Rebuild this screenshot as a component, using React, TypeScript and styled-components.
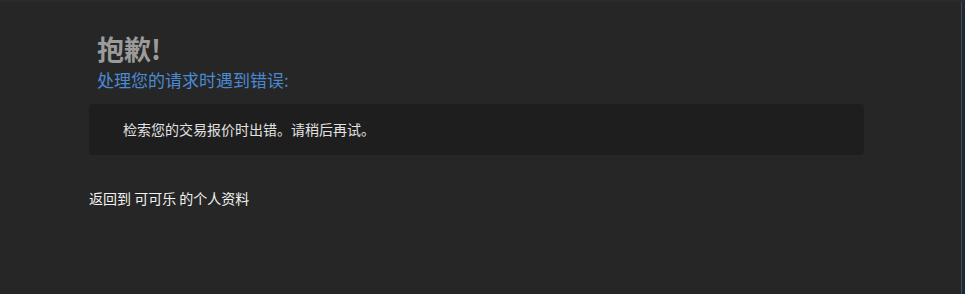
import React from "react";
import styled, { createGlobalStyle } from "styled-components";

const GlobalStyle = createGlobalStyle`
  html, body {
    margin: 0;
    padding: 0;
    background: #262626;
  }
  body {
    font-family: "Noto Sans CJK SC", "Noto Sans", sans-serif;
  }
`;

const Frame = styled.div`
  display: flex;
  height: 294px;
  background: #262626;
  border-top: 2px solid #2b2b2b;
  box-sizing: border-box;
`;

const Main = styled.div`
  flex: 1;
  padding: 28px 0 0 89px;
  box-sizing: border-box;
`;

const SideEdge = styled.div`
  width: 3px;
  border-left: 1px solid #4a4a4a;
  background: #1b2a3a;
`;

const Header = styled.div`
  padding-left: 8px;
`;

const Title = styled.h1`
  margin: 0;
  font-size: 27px;
  line-height: 38px;
  font-weight: 700;
  color: #9b9b9b;
`;

const Subtitle = styled.h2`
  margin: 0;
  font-size: 17px;
  line-height: 24px;
  font-weight: 400;
  color: #4a8ad4;
`;

const MessageBox = styled.div`
  width: 775px;
  margin-top: 12px;
  padding: 14px 34px;
  box-sizing: border-box;
  height: 51px;
  background: #1e1e1e;
  border-radius: 4px;
  color: #e2e2e2;
  font-size: 14px;
  line-height: 22px;
`;

const BackLink = styled.a`
  display: inline-block;
  margin-top: 32px;
  font-size: 14px;
  line-height: 22px;
  color: #f2f2f2;
  text-decoration: none;
  cursor: pointer;
`;

const App: React.FC = () => {
  return (
    <>
      <GlobalStyle />
      <Frame>
        <Main>
          <Header>
            <Title>抱歉!</Title>
            <Subtitle>处理您的请求时遇到错误:</Subtitle>
          </Header>
          <MessageBox>检索您的交易报价时出错。请稍后再试。</MessageBox>
          <BackLink>返回到 可可乐 的个人资料</BackLink>
        </Main>
        <SideEdge />
      </Frame>
    </>
  );
};

export default App;
